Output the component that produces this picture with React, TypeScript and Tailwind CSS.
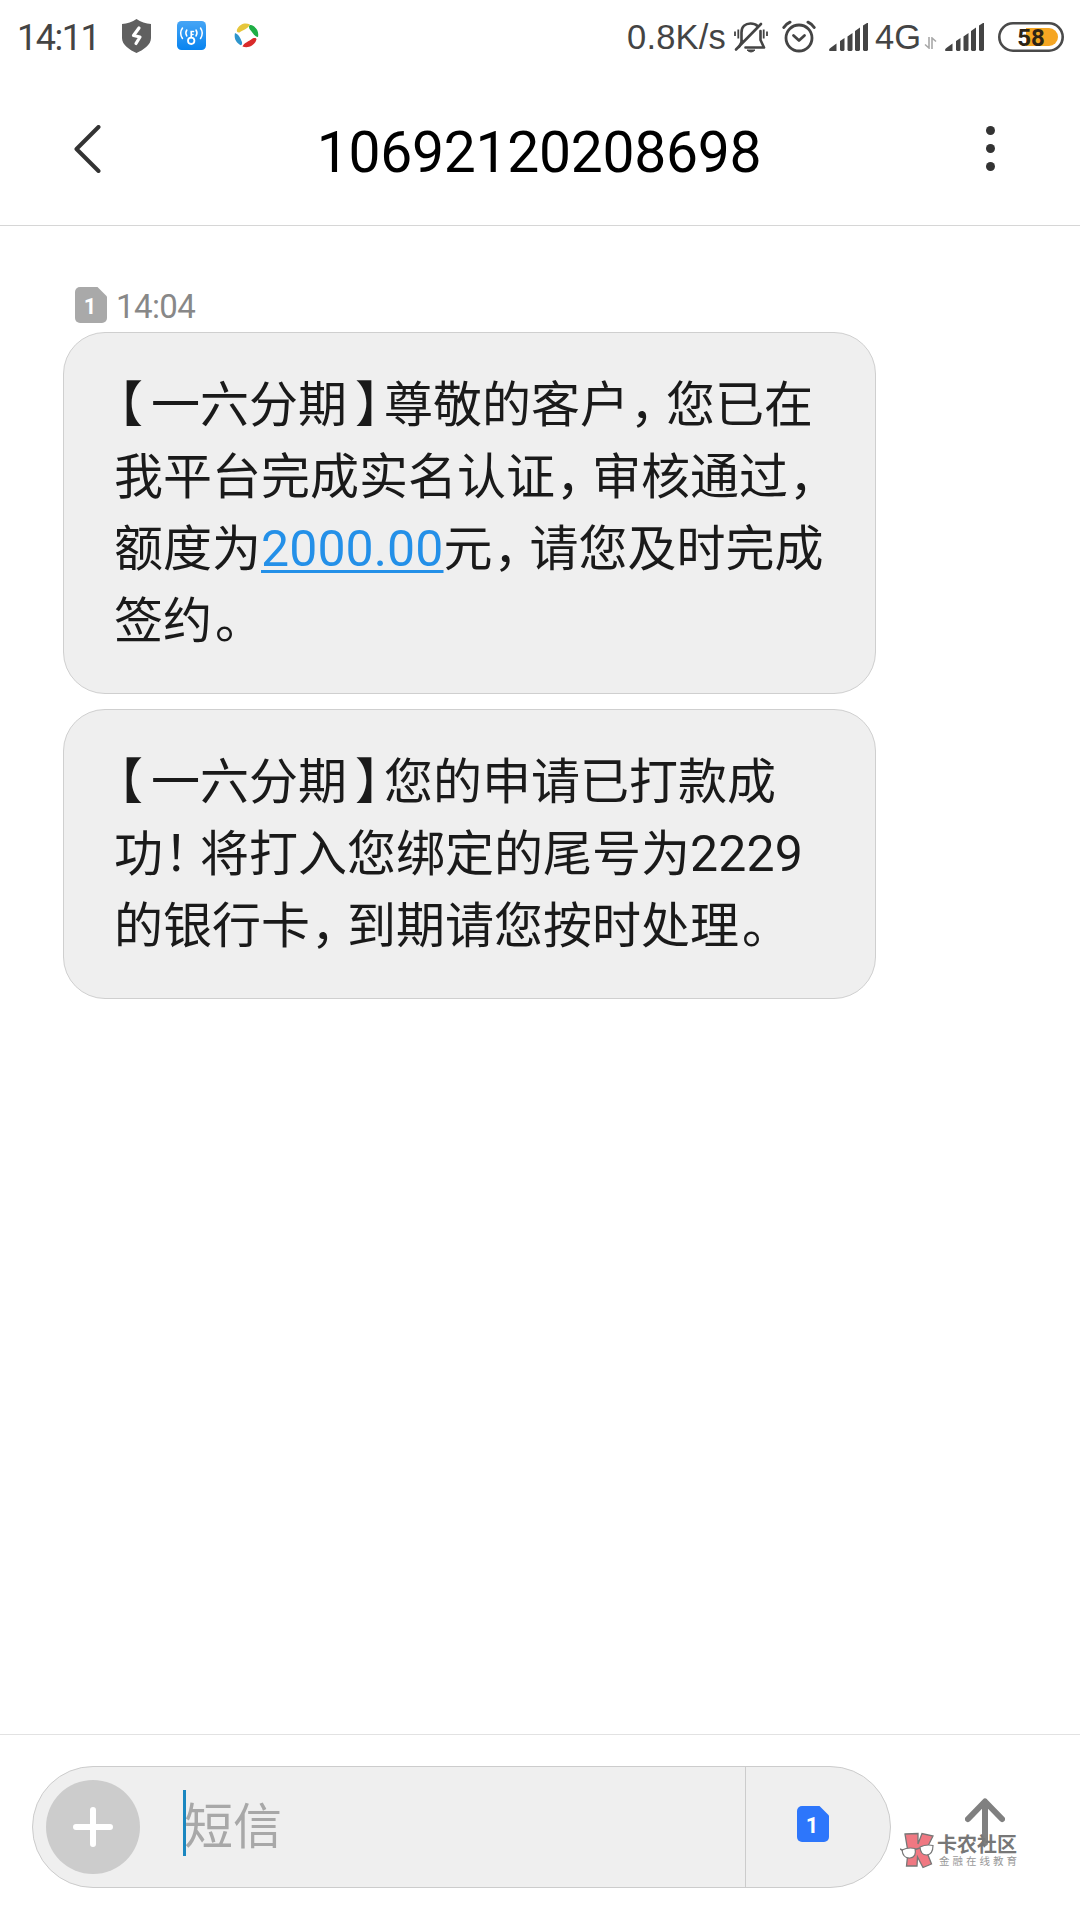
import React, { ReactNode } from 'react';

const LATIN = "font-['Roboto','Noto_Sans_CJK_SC',sans-serif]";

// Full-width punctuation is set tighter than the characters around it.
const punctuation: Record<string, string> = {
    '【': 'ml-[4.5px] mr-[8px]',
    '】': 'ml-[8px] mr-[4.5px]',
    '，': 'ml-[1px] mr-[11.5px]',
    '！': 'ml-[1px] mr-[11.5px]',
    '。': 'ml-[3px] mr-[9.5px]',
};

function Line({ text, children }: { text?: string; children?: ReactNode }) {
    return (
        <div className="h-[72px] whitespace-nowrap">
            {text && <Chars text={text} />}
            {children}
        </div>
    );
}

function Chars({ text }: { text: string }) {
    return (
        <>
            {text.split(/([【】，！。])/).map((part, i) =>
                punctuation[part] ? (
                    <span
                        key={i}
                        className={`inline-block [font-feature-settings:'halt'] ${punctuation[part]}`}
                    >
                        {part}
                    </span>
                ) : (
                    part
                ),
            )}
        </>
    );
}

function Digits({ children }: { children: ReactNode }) {
    return (
        <span className="font-['Roboto',sans-serif] text-[50px] leading-none tracking-[0.1px]">
            {children}
        </span>
    );
}

function Bubble({ children }: { children: ReactNode }) {
    return (
        <div className="w-[813px] rounded-[42px] border border-[#cfcfcf] bg-[#efefef] pt-[32px] pb-[40px] pl-[50px] font-['Noto_Sans_CJK_SC',sans-serif] text-[49px] leading-[72px] text-[#1a1a1a]">
            {children}
        </div>
    );
}

function SimBadge({ className }: { className: string }) {
    return (
        <svg width="32" height="36" viewBox="0 0 32 36" className={className}>
            <path
                d="M5 0H22.500L32 9.500V31a5 5 0 0 1-5 5H5a5 5 0 0 1-5-5V5a5 5 0 0 1 5-5Z"
                fill="currentColor"
            />
            <text
                x="15"
                y="27"
                textAnchor="middle"
                fill="#fff"
                className="font-['Roboto',sans-serif] text-[22px] font-bold"
            >
                1
            </text>
        </svg>
    );
}

function Signal({ className }: { className: string }) {
    return (
        <svg width="39" height="28" viewBox="0 0 39 28" className={className}>
            <path
                fill="currentColor"
                d="M0 27 Q0 25.500 2 24.500L7.500 20.500V28H1Q0 28 0 27ZM11 18 L15.500 15V27L14.500 28H12L11 27ZM18.500 13.500 L23.500 10V27L22.500 28H19.500L18.500 27ZM26 8 L31 4.500V27L30 28H27L26 27ZM34 2.500 L38 0H39V27L38 28H35L34 27Z"
            />
        </svg>
    );
}

function StatusBar() {
    return (
        <div
            className={`flex h-[72px] items-center pt-[1px] pl-[17px] text-[#444] ${LATIN}`}
        >
            <span className="mt-[2px] w-[105px] text-[36px] leading-none tracking-[-1.500px]">
                14:11
            </span>
            <svg width="29" height="34" viewBox="0 0 29 34" className="mb-[2px] text-[#606060]">
                <path
                    fill="currentColor"
                    d="M14.500 0C18.500 3 24 4.500 29 5V19C29 26 21 31 14.500 34C8 31 0 26 0 19V5C5 4.500 10.500 3 14.500 0Z"
                />
                <path
                    d="M17 9L11.500 16.500L18 18L14 24.500"
                    stroke="#fff"
                    strokeWidth="3.200"
                    fill="none"
                    strokeLinecap="round"
                    strokeLinejoin="round"
                />
            </svg>
            <svg width="29" height="29" viewBox="0 0 29 29" className="mb-[2px] ml-[26px]">
                <defs>
                    <linearGradient id="wifi" x1="0" y1="0" x2="0" y2="1">
                        <stop offset="0" stopColor="#46a5f5" />
                        <stop offset="1" stopColor="#0884f0" />
                    </linearGradient>
                </defs>
                <rect width="29" height="29" rx="4.500" fill="url(#wifi)" />
                <g fill="none" stroke="#fff" strokeLinecap="round">
                    <circle cx="14.200" cy="19.800" r="3.200" strokeWidth="1.800" />
                    <path d="M14.200 16.500V10.500H16.500M14.500 13.500H16" strokeWidth="1.600" />
                    <path d="M9.800 9Q7.800 12 9.800 15M5.500 7Q1.800 12 5.500 17.500" strokeWidth="1.500" />
                    <path d="M19 9Q21 12 19 15M23.500 7Q27 12 23.500 17.500" strokeWidth="1.500" />
                </g>
            </svg>
            <svg width="25" height="25" viewBox="0 0 25 25" className="mb-[2px] ml-[28px]">
                <path fill="#e6c63c" d="M3 6.500C6 0 12 -0.500 16 1.500C14 6 9 7 5.500 9.500C3 10 2.500 8 3 6.500Z" />
                <path fill="#1fae45" d="M17 2C23 4 25 9 24 14C20 13.500 18.500 9 15.500 6C14.500 3.500 15 2 17 2Z" />
                <path fill="#d92b2b" d="M22.500 16.500C20.500 23 14 25.500 8.500 23.500C10 19.500 15 18.500 18.500 15.500C21.500 14.500 22.500 15.500 22.500 16.500Z" />
                <path fill="#2d95cc" d="M1 10C5 11.500 6.500 15.500 8 19C8.500 22 7 23 5.500 21.500C1 18.500 0 14 1 10Z" />
            </svg>

            <span className="mt-[1px] ml-[368px] w-[107px] font-['Liberation_Sans',sans-serif] text-[34.500px] leading-none tracking-[0.2px] whitespace-nowrap">
                0.8K/s
            </span>
            <svg width="34" height="32" viewBox="0 0 34 32" fill="none" stroke="currentColor">
                <g strokeWidth="2.600" strokeLinecap="round" strokeLinejoin="round">
                    <path d="M7.500 20V11.500C7.500 5.500 11.500 2.500 16.500 2.500C19.500 2.500 22 3.500 23.500 5" />
                    <path d="M26.500 10V19L30 26.500H11.500" />
                    <path d="M27 3L2 28.500" />
                    <path d="M5 26L8 20" />
                </g>
                <path d="M13 29H21Q17 33 13 29Z" fill="currentColor" strokeWidth="1" />
                <path d="M1 10.500V15M4.300 8.500V17.500M29.700 8.500V17.500M33 10.500V15" strokeWidth="1.800" />
            </svg>
            <svg
                width="34"
                height="33"
                viewBox="0 0 34 33"
                fill="none"
                stroke="currentColor"
                strokeLinecap="round"
                strokeLinejoin="round"
                className="ml-[14px]"
            >
                <circle cx="17" cy="18" r="13" strokeWidth="2.800" />
                <path d="M11.500 15.500L17 20.500L22.500 15.500" strokeWidth="2.800" />
                <path d="M1.800 7.500Q4 4 8 2.200M32.200 7.500Q30 4 26 2.200" strokeWidth="3" />
            </svg>
            <Signal className="ml-[13px]" />
            <span className="mt-[1px] ml-[7px] w-[47px] font-['Liberation_Sans',sans-serif] text-[34.500px] leading-none">
                4G
            </span>
            <svg
                width="13"
                height="12"
                viewBox="0 0 13 12"
                fill="none"
                stroke="#a8a8a8"
                strokeWidth="1.600"
                className="mt-[12px] ml-[2px]"
            >
                <path d="M5 0V11L1 7.500M8 12V1L12 4.500" />
            </svg>
            <Signal className="ml-[8px]" />
            <svg width="66" height="30" viewBox="0 0 66 30" className="ml-[14px]">
                <rect x="1.300" y="1.300" width="63.400" height="27.400" rx="13.700" fill="#fff" stroke="#4a4a4a" strokeWidth="2.600" />
                <path d="M28 6H51a9 9 0 0 1 0 18H28Z" fill="#f5a623" />
                <text
                    x="33"
                    y="23.500"
                    textAnchor="middle"
                    fill="#2d2416"
                    className="font-['Roboto',sans-serif] text-[24px] font-bold"
                >
                    58
                </text>
            </svg>
        </div>
    );
}

function Header() {
    return (
        <div className="flex h-[154px] items-center justify-between border-b border-[#d6d6d6] pr-[85px] pl-[74px]">
            <svg width="28" height="48" viewBox="0 0 28 48" className="mt-[1px]">
                <path
                    d="M24.500 2L2.500 24L24.500 46"
                    fill="none"
                    stroke="#333"
                    strokeWidth="4"
                    strokeLinecap="round"
                    strokeLinejoin="round"
                />
            </svg>
            <h1
                className={`mt-[8px] mr-[10px] text-[57px] leading-none tracking-[-0.300px] text-black ${LATIN}`}
            >
                10692120208698
            </h1>
            <div className="flex flex-col gap-[9px]">
                <span className="size-[9px] rounded-full bg-[#333]" />
                <span className="size-[9px] rounded-full bg-[#333]" />
                <span className="size-[9px] rounded-full bg-[#333]" />
            </div>
        </div>
    );
}

function Watermark() {
    return (
        <div className="absolute top-[97px] left-[900px] flex items-center font-['Noto_Sans_CJK_SC',sans-serif]">
            <svg width="35" height="37" viewBox="0 0 35 37">
                <path
                    d="M5 2L18 1.500V12L22 1.500L33 4L26 18L31.500 32L23 35.500L17.500 25L17 34H6.500L8 20Z"
                    fill="#f07882"
                    stroke="#777"
                    strokeWidth="1.300"
                />
                <g fill="#fff" stroke="#777" strokeWidth="1.200">
                    <path d="M2 18Q8 15 15 16.500Q17 25 10 26Q3 26.500 2 18Z" />
                    <path d="M20 15Q26 12 33 13.500Q33 22.500 26.500 23Q20.500 23 20 15Z" />
                </g>
                <path d="M0 17L3 18.500M15 17.500L20 16" stroke="#777" strokeWidth="1.500" />
            </svg>
            <div className="ml-[2px] flex flex-col text-[#777]">
                <span className="text-[20px] leading-[20px] font-bold whitespace-nowrap">
                    卡农社区
                </span>
                <span className="mt-[1px] ml-[2px] text-[10.500px] leading-[12px] tracking-[3px] whitespace-nowrap text-[#999]">
                    金融在线教育
                </span>
            </div>
        </div>
    );
}

function Composer() {
    return (
        <div className="relative flex h-[186px] items-start border-t border-[#e2e2e2] pt-[31px] pl-[32px]">
            <div className="flex h-[122px] w-[859px] items-center rounded-full border border-[#cccccc] bg-[#efefef]">
                <div className="ml-[13px] flex size-[94px] items-center justify-center rounded-full bg-[#cccccc]">
                    <svg width="40" height="40" viewBox="0 0 40 40">
                        <path
                            d="M20 3V37M3 20H37"
                            stroke="#fff"
                            strokeWidth="6"
                            strokeLinecap="round"
                        />
                    </svg>
                </div>
                <div className="mb-[8px] ml-[43px] h-[66px] w-[3px] bg-[#1a87c0]" />
                <span className="mb-[9px] -ml-[2px] font-['Noto_Sans_CJK_SC',sans-serif] text-[49px] leading-none text-[#a8a8a8]">
                    短信
                </span>
                <div className="ml-auto flex h-full w-[145px] items-center border-l border-[#cccccc] pl-[51px]">
                    <SimBadge className="mb-[6px] text-[#2d76fb]" />
                </div>
            </div>
            <svg
                width="40"
                height="50"
                viewBox="0 0 40 50"
                fill="none"
                stroke="#808080"
                strokeWidth="6"
                strokeLinecap="round"
                strokeLinejoin="round"
                className="mt-[32px] ml-[74px]"
            >
                <path d="M3 21L20 3.500L37 21M20 5V45" />
            </svg>
            <Watermark />
        </div>
    );
}

export default function App() {
    return (
        <div className="flex h-[1920px] w-[1080px] flex-col overflow-hidden bg-white">
            <StatusBar />
            <Header />
            <div className="flex flex-1 flex-col pt-[61px] pl-[63px]">
                <div className="mb-[9px] flex h-[36px] items-center pl-[12px]">
                    <SimBadge className="text-[#a9a9a9]" />
                    <span className="mt-[3px] ml-[9px] font-['Roboto',sans-serif] text-[33px] leading-none tracking-[-0.6px] text-[#888]">
                        14:04
                    </span>
                </div>
                <div className="flex flex-col gap-[15px]">
                    <Bubble>
                        <Line text="【一六分期】尊敬的客户，您已在" />
                        <Line text="我平台完成实名认证，审核通过，" />
                        <Line>
                            额度为
                            <span className="text-[#2490e8] underline decoration-[3px] underline-offset-[4px]">
                                <Digits>2000.00</Digits>
                            </span>
                            <Chars text="元，请您及时完成" />
                        </Line>
                        <Line text="签约。" />
                    </Bubble>
                    <Bubble>
                        <Line text="【一六分期】您的申请已打款成" />
                        <Line>
                            <Chars text="功！将打入您绑定的尾号为" />
                            <Digits>2229</Digits>
                        </Line>
                        <Line text="的银行卡，到期请您按时处理。" />
                    </Bubble>
                </div>
            </div>
            <Composer />
        </div>
    );
}
